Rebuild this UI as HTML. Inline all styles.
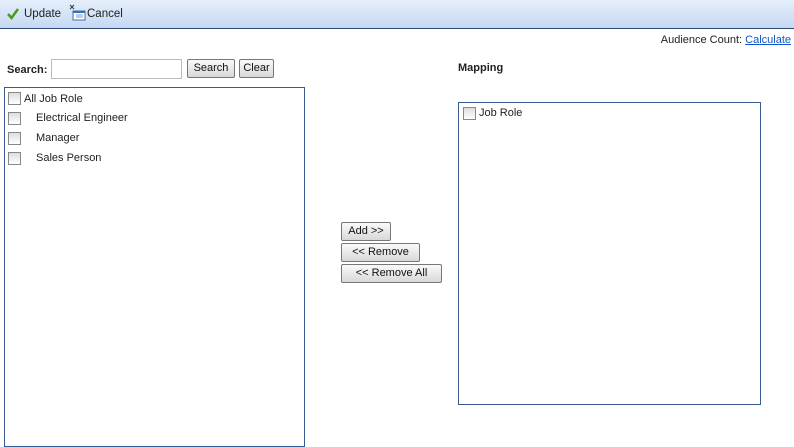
<!DOCTYPE html>
<html><head><style>
body{margin:0;width:794px;height:439px;overflow:hidden;background:#fff;font-family:"Liberation Sans",Arial,sans-serif;font-size:12px;color:#222;position:relative}
.a{position:absolute;white-space:nowrap}
.tb{left:0;top:0;width:794px;height:28px;background:linear-gradient(#e6effb,#c5d8f3);border-bottom:1px solid #2c4a74}
.btn{position:absolute;box-sizing:border-box;border:1px solid #777;border-radius:2px;background:linear-gradient(#fafafa,#d8d8d8);font-size:11px;text-align:center;line-height:17px;color:#111;white-space:nowrap}
.cb{position:absolute;width:11px;height:11px;border:1px solid #888;background:linear-gradient(#ddd,#fff)}
.box{position:absolute;border:1px solid #3a5a8f;box-sizing:border-box}
</style></head><body>
<div class="a tb"></div>
<svg class="a" style="left:6px;top:7px" width="14" height="14"><path d="M2 7 L5.5 11 L12 2" stroke="#4a9a1e" stroke-width="2.5" fill="none"/></svg>
<div class="a" style="left:24px;top:8px;font-size:11.5px">Update</div>
<svg class="a" style="left:69px;top:4px" width="18" height="18"><path d="M1 1L5 5M5 1L1 5" stroke="#333" stroke-width="1"/><rect x="4" y="7" width="12" height="9" fill="#fff" stroke="#3a6fb0"/><rect x="4" y="7" width="12" height="2" fill="#3a6fb0"/><path d="M7 11h7M7 13h7" stroke="#7a9ccc"/></svg>
<div class="a" style="left:87px;top:8px;font-size:11.5px">Cancel</div>
<div class="a" style="right:3px;top:34px;font-size:11px">Audience Count: <span style="color:#1155cc;text-decoration:underline">Calculate</span></div>
<div class="a" style="left:7px;top:64px;font-weight:bold;font-size:11px">Search:</div>
<div class="a" style="left:51px;top:59px;width:129px;height:18px;border:1px solid #bbb"></div>
<div class="btn" style="left:187px;top:59px;width:48px;height:19px">Search</div>
<div class="btn" style="left:239px;top:59px;width:35px;height:19px">Clear</div>
<div class="a" style="left:458px;top:62px;font-weight:bold;font-size:11px">Mapping</div>
<div class="box" style="left:4px;top:87px;width:301px;height:360px"></div>
<div class="cb" style="left:8px;top:92px"></div><div class="a" style="left:24px;top:93px;font-size:11px">All Job Role</div>
<div class="cb" style="left:8px;top:112px"></div><div class="a" style="left:36px;top:112px;font-size:11px">Electrical Engineer</div>
<div class="cb" style="left:8px;top:132px"></div><div class="a" style="left:36px;top:132px;font-size:11px">Manager</div>
<div class="cb" style="left:8px;top:152px"></div><div class="a" style="left:36px;top:152px;font-size:11px">Sales Person</div>
<div class="btn" style="left:341px;top:222px;width:50px;height:19px">Add &gt;&gt;</div>
<div class="btn" style="left:341px;top:243px;width:79px;height:19px">&lt;&lt; Remove</div>
<div class="btn" style="left:341px;top:264px;width:101px;height:19px">&lt;&lt; Remove All</div>
<div class="box" style="left:458px;top:102px;width:303px;height:303px"></div>
<div class="cb" style="left:463px;top:107px"></div><div class="a" style="left:479px;top:107px;font-size:11px">Job Role</div>
</body></html>
